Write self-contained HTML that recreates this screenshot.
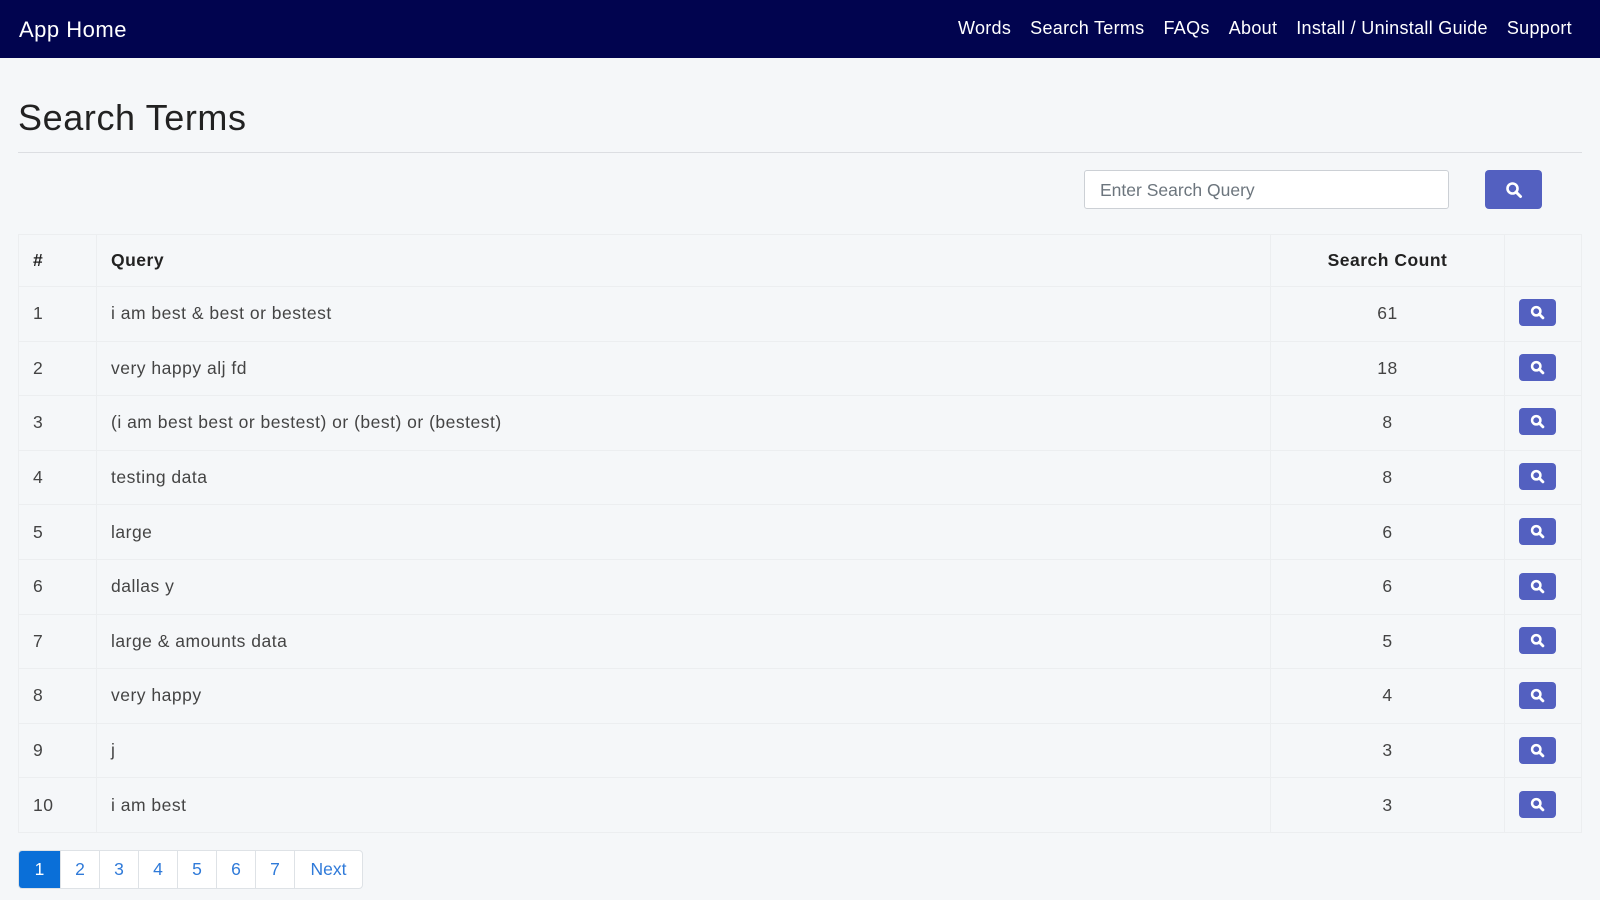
<!DOCTYPE html>
<html><head><meta charset="utf-8"><style>
*{box-sizing:border-box;margin:0;padding:0}
body{width:1600px;height:900px;overflow:hidden;background:#f5f7f9;font-family:"Liberation Sans",sans-serif;color:#333;position:relative}
.nav{position:absolute;left:0;top:0;width:1600px;height:58px;background:#01044f;color:#fff}
.brand{position:absolute;left:19px;top:17px;font-size:22px;letter-spacing:0.5px}
.links{position:absolute;right:28px;top:18px;font-size:18px;letter-spacing:0.3px;display:flex;gap:19px}
h1{position:absolute;left:18px;top:97px;font-size:36px;letter-spacing:0.6px;font-weight:normal;color:#222}
.hr{position:absolute;left:18px;top:152px;width:1564px;height:1px;background:#dcdee2}
.inp{position:absolute;left:1084px;top:170px;width:365px;height:39px;border:1px solid #ccd0d5;border-radius:3px;background:#fff;font-size:17.5px;color:#6c757d;padding:9px 15px}
.btn{position:absolute;background:#5360c0;border-radius:4px;display:flex;align-items:center;justify-content:center}
table{position:absolute;left:18px;top:234px;width:1564px;border-collapse:collapse;font-size:17.5px;letter-spacing:0.5px}
td,th{border:1px solid #eceef0;padding:0 14px;text-align:left}
th{height:52px;font-weight:bold;color:#222}
td{height:54.6px;color:#444}
.c{text-align:center}
.pg{position:absolute;left:18px;top:850px;display:flex;height:39px;border:1px solid #dee2e6;border-radius:4px;overflow:hidden;background:#fff}
.pg span{display:flex;align-items:center;justify-content:center;width:39px;border-left:1px solid #dee2e6;color:#2f7ad9;font-size:17.5px}
.pg span:first-child{border:0;background:#0a6fd8;color:#fff;width:41px}
.pg span:last-child{width:68px}
</style></head><body>
<div class="nav"><div class="brand">App Home</div>
<div class="links"><span>Words</span><span>Search Terms</span><span>FAQs</span><span>About</span><span>Install / Uninstall Guide</span><span>Support</span></div></div>
<h1>Search Terms</h1>
<div class="hr"></div>
<div class="inp">Enter Search Query</div>
<div class="btn" style="left:1485px;top:170px;width:57px;height:39px"><svg width="18" height="18" viewBox="0 0 18 18"><circle cx="7.5" cy="7.5" r="5" fill="none" stroke="#fff" stroke-width="2.6"/><path d="M11 11l4.5 4.5" stroke="#fff" stroke-width="3" stroke-linecap="round"/></svg></div>
<table>
<tr><th style="width:78px">#</th><th>Query</th><th class="c" style="width:234px">Search Count</th><th style="width:77px"></th></tr>
<tr><td>1</td><td>i am best &amp; best or bestest</td><td class="c">61</td><td></td></tr>
<tr><td>2</td><td>very happy alj fd</td><td class="c">18</td><td></td></tr>
<tr><td>3</td><td>(i am best best or bestest) or (best) or (bestest)</td><td class="c">8</td><td></td></tr>
<tr><td>4</td><td>testing data</td><td class="c">8</td><td></td></tr>
<tr><td>5</td><td>large</td><td class="c">6</td><td></td></tr>
<tr><td>6</td><td>dallas y</td><td class="c">6</td><td></td></tr>
<tr><td>7</td><td>large &amp; amounts data</td><td class="c">5</td><td></td></tr>
<tr><td>8</td><td>very happy</td><td class="c">4</td><td></td></tr>
<tr><td>9</td><td>j</td><td class="c">3</td><td></td></tr>
<tr><td>10</td><td>i am best</td><td class="c">3</td><td></td></tr>
</table>
<div id="sb"></div>
<div class="pg"><span>1</span><span>2</span><span>3</span><span>4</span><span>5</span><span>6</span><span>7</span><span>Next</span></div>
<script>
var s='';for(var i=0;i<10;i++){var t=299+i*54.7;s+='<div class="btn" style="left:1519px;top:'+t+'px;width:37px;height:27px"><svg width="15" height="15" viewBox="0 0 18 18"><circle cx="7.5" cy="7.5" r="5" fill="none" stroke="#fff" stroke-width="3"/><path d="M11 11l4.5 4.5" stroke="#fff" stroke-width="3.4" stroke-linecap="round"/></svg></div>';}
document.getElementById('sb').innerHTML=s;
</script>
</body></html>
